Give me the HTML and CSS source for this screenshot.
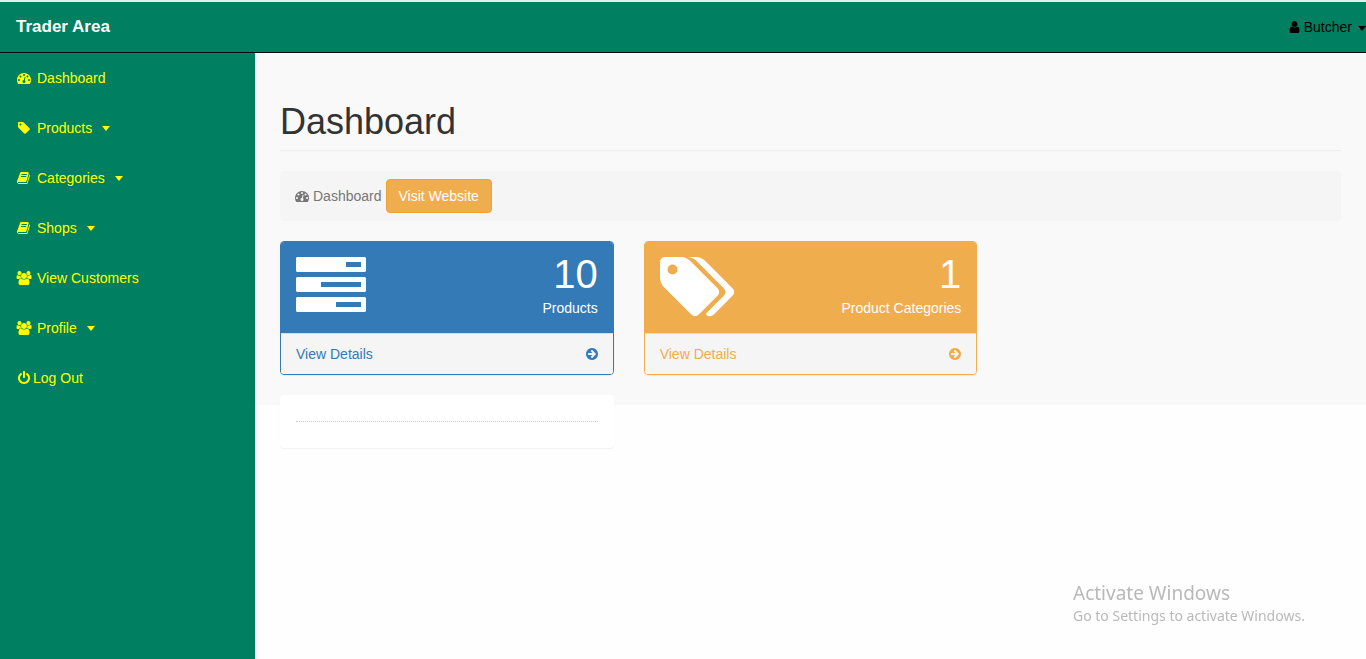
FILE: index.html
```html
<!DOCTYPE html>
<html lang="en">
<head>
<meta charset="utf-8">
<title>Trader Area</title>
<link rel="stylesheet" href="styles.css">
</head>
<body>
<svg class="sprite" aria-hidden="true">
  <symbol id="dash" viewBox="0 0 1792 1792"><path d="M384 1152q0-53-37.5-90.5t-90.5-37.5-90.5 37.5-37.5 90.5 37.5 90.5 90.5 37.5 90.5-37.5 37.5-90.5zm192-448q0-53-37.5-90.5t-90.5-37.5-90.5 37.5-37.5 90.5 37.5 90.5 90.5 37.5 90.5-37.5 37.5-90.5zm428 481l101-382q6-26-7.5-48.5t-38.5-29.5-48 6.5-30 39.5l-101 382q-60 5-107 43.5t-63 98.5q-20 77 20 146t117 89 146-20 89-117q16-60-6-117t-72-91zm660-33q0-53-37.5-90.5t-90.5-37.5-90.5 37.5-37.5 90.5 37.5 90.5 90.5 37.5 90.5-37.5 37.5-90.5zm-640-640q0-53-37.5-90.5t-90.5-37.5-90.5 37.5-37.5 90.5 37.5 90.5 90.5 37.5 90.5-37.5 37.5-90.5zm448 192q0-53-37.5-90.5t-90.5-37.5-90.5 37.5-37.5 90.5 37.5 90.5 90.5 37.5 90.5-37.5 37.5-90.5zm320 448q0 261-141 483-19 29-54 29h-1402q-35 0-54-29-141-221-141-483 0-182 71-348t191-286 286-191 348-71 348 71 286 191 191 286 71 348z"/></symbol>
  <symbol id="tag" viewBox="0 0 1792 1792"><path d="M576 448q0-53-37.5-90.5t-90.5-37.5-90.5 37.5-37.5 90.5 37.5 90.5 90.5 37.5 90.5-37.5 37.5-90.5zm1067 576q0 53-37 90l-491 492q-39 37-91 37-53 0-90-37l-715-716q-38-37-64.5-101t-26.5-117v-416q0-52 38-90t90-38h416q53 0 117 26.5t102 64.5l715 714q37 39 37 91z"/></symbol>
  <symbol id="book" viewBox="0 0 1792 1792"><path d="M1639 478q40 57 18 129l-275 906q-19 64-76.5 107.5t-122.5 43.5h-923q-77 0-148.5-53.5t-99.5-131.5q-24-67-2-127 0-4 3-27t4-37q1-8-3-21.5t-3-19.5q2-11 8-21t16.5-23.5 16.5-23.5q23-38 45-91.5t30-91.5q3-10 .5-30t-.5-28q3-11 17-28t17-23q21-36 42-92t25-90q1-9-2.5-32t.5-28q4-13 22-30.5t22-22.5q19-26 42.5-84.5t27.5-96.5q1-8-3-25.5t-2-26.5q2-8 9-18t18-23 17-21q8-12 16.5-30.5t15-35 16-36 19.5-32 26.5-23.5 36-11.5 47.5 5.5l-1 3q38-9 51-9h761q74 0 114 56t18 130l-274 906q-36 119-71.5 153.5t-128.5 34.5h-869q-27 0-38 15-11 16-1 43 24 70 144 70h923q29 0 56-15.5t35-41.5l300-987q7-22 5-57 38 15 59 43zm-1064 2q-4 13 2 22.5t20 9.5h608q13 0 25.5-9.5t16.5-22.5l21-64q4-13-2-22.5t-20-9.5h-608q-13 0-25.5 9.5t-16.5 22.5zm-83 256q-4 13 2 22.5t20 9.5h608q13 0 25.5-9.5t16.5-22.5l21-64q4-13-2-22.5t-20-9.5h-608q-13 0-25.5 9.5t-16.5 22.5z"/></symbol>
  <symbol id="users" viewBox="0 0 1920 1792"><path d="M593 896q-162 5-265 128h-134q-82 0-138-40.5t-56-118.5q0-353 124-353 6 0 43.5 21t97.5 42.5 119 21.5q67 0 133-23-5 37-5 66 0 159 93 293zm1071 637q0 120-73 189.5t-194 69.5h-874q-121 0-194-69.5t-73-189.5q0-53 3.5-103.5t14-109 26.5-108.5 43-97.5 62-81 85.5-53.5 111.5-20q10 0 43 21.5t73 48 107 48 135 21.5 135-21.5 107-48 73-48 43-21.5q61 0 111.5 20t85.5 53.5 62 81 43 97.5 26.5 108.5 14 109 3.5 103.5zm-1024-1277q0 106-75 181t-181 75-181-75-75-181 75-181 181-75 181 75 75 181zm704 384q0 159-112.5 271.5t-271.5 112.5-271.5-112.5-112.5-271.5 112.5-271.5 271.5-112.5 271.5 112.5 112.5 271.5zm576 225q0 78-56 118.5t-138 40.5h-134q-103-123-265-128 93-134 93-293 0-29-5-66 66 23 133 23 59 0 119-21.5t97.5-42.5 43.5-21q124 0 124 353zm-128-609q0 106-75 181t-181 75-181-75-75-181 75-181 181-75 181 75 75 181z"/></symbol>
  <symbol id="power" viewBox="0 0 1792 1792"><path d="M1664 896q0 156-61 298t-164 245-245 164-298 61-298-61-245-164-164-245-61-298q0-182 80.5-343t226.5-270q43-32 95.5-25t83.5 50q32 42 24.5 94.5t-49.5 84.5q-98 74-151.5 181t-53.5 228q0 104 40.5 198.5t109.5 163.5 163.5 109.5 198.5 40.5 198.5-40.5 163.5-109.5 109.5-163.5 40.5-198.5q0-121-53.5-228t-151.5-181q-42-32-49.5-84.5t24.5-94.5q31-43 84-50t95 25q146 109 226.5 270t80.5 343zm-640-768v640q0 52-38 90t-90 38-90-38-38-90v-640q0-52 38-90t90-38 90 38 38 90z"/></symbol>
  <symbol id="user" viewBox="256 0 1280 1792"><path d="M1536 1399q0 109-62.5 187t-150.5 78h-854q-88 0-150.5-78t-62.5-187q0-85 8.5-160.5t31.5-152 58.5-131 94-89 134.5-34.5q131 128 313 128t313-128q76 0 134.5 34.5t94 89 58.5 131 31.5 152 8.5 160.5zm-256-887q0 159-112.5 271.5t-271.5 112.5-271.5-112.5-112.5-271.5 112.5-271.5 271.5-112.5 271.5 112.5 112.5 271.5z"/></symbol>
  <symbol id="go" viewBox="128 0 1536 1792"><path d="M1413 896q0-27-18-45l-91-91-362-362q-18-18-45-18t-45 18l-91 91q-18 18-18 45t18 45l189 189h-502q-26 0-45 19t-19 45v128q0 26 19 45t45 19h502l-189 189q-19 19-19 45t19 45l91 91q18 18 45 18t45-18l362-362 91-91q18-18 18-45zm251 0q0 209-103 385.5t-279.5 279.5-385.5 103-385.5-103-279.5-279.5-103-385.5 103-385.5 279.5-279.5 385.5-103 385.5 103 279.5 279.5 103 385.5z"/></symbol>
  <symbol id="caret" viewBox="0 0 8 5"><path d="M0 0h8L4 5z"/></symbol>
</svg>

<header class="navbar">
  <a class="brand" href="#">Trader Area</a>
  <a class="account" href="#"><svg class="icon-user"><use href="#user"/></svg><span>Butcher</span><svg class="caret"><use href="#caret"/></svg></a>
</header>

<div class="layout">
  <nav class="sidebar">
    <a href="#"><svg class="icon"><use href="#dash"/></svg><span>Dashboard</span></a>
    <a href="#"><svg class="icon"><use href="#tag"/></svg><span>Products</span><svg class="caret"><use href="#caret"/></svg></a>
    <a href="#"><svg class="icon"><use href="#book"/></svg><span>Categories</span><svg class="caret"><use href="#caret"/></svg></a>
    <a href="#"><svg class="icon"><use href="#book"/></svg><span>Shops</span><svg class="caret"><use href="#caret"/></svg></a>
    <a href="#"><svg class="icon"><use href="#users"/></svg><span>View Customers</span></a>
    <a href="#"><svg class="icon"><use href="#users"/></svg><span>Profile</span><svg class="caret"><use href="#caret"/></svg></a>
    <a class="logout" href="#"><svg class="icon"><use href="#power"/></svg><span>Log Out</span></a>
  </nav>

  <main class="content">
    <div class="overview">
      <h1>Dashboard</h1>
      <div class="breadcrumb">
        <svg class="icon-crumb"><use href="#dash"/></svg>
        <span>Dashboard</span>
        <button class="btn" type="button">Visit Website</button>
      </div>
      <div class="cards">
        <section class="card card-blue">
          <div class="card-head">
            <svg class="tasks" viewBox="0 0 70 55"><path fill-rule="evenodd" d="M1 0h68l1 1v13l-1 1H1l-1-1V1zM50 5h15v5H50zM1 20h68l1 1v13l-1 1H1l-1-1V21zM25 25h40v5H25zM1 40h68l1 1v13l-1 1H1l-1-1V41zM40 45h25v5H40z"/></svg>
            <div class="stat"><div class="number">10</div><div>Products</div></div>
          </div>
          <a class="card-foot" href="#"><span>View Details</span><svg class="icon-go"><use href="#go"/></svg></a>
        </section>
        <section class="card card-orange">
          <div class="card-head">
            <svg class="tags" viewBox="0 128 1920 1536"><path d="M448 448q0-53-37.5-90.5t-90.5-37.5-90.5 37.5-37.5 90.5 37.5 90.5 90.5 37.5 90.5-37.5 37.5-90.5zm1067 576q0 53-37 90l-491 492q-39 37-91 37-53 0-90-37l-715-716q-38-37-64.5-101t-26.5-117v-416q0-52 38-90t90-38h416q53 0 117 26.5t102 64.5l715 714q37 39 37 91zm384 0q0 53-37 90l-491 492q-39 37-91 37-36 0-59-14t-53-45l470-470q37-37 37-90 0-52-37-91l-715-714q-38-38-102-64.5t-117-26.5h224q53 0 117 26.5t102 64.5l715 714q37 39 37 91z"/></svg>
            <div class="stat"><div class="number">1</div><div>Product Categories</div></div>
          </div>
          <a class="card-foot" href="#"><span>View Details</span><svg class="icon-go"><use href="#go"/></svg></a>
        </section>
      </div>
    </div>
    <div class="extra cards">
      <section class="panel"><hr></section>
    </div>
  </main>
</div>

<aside class="watermark">
  <div class="watermark-title">Activate Windows</div>
  <div>Go to Settings to activate Windows.</div>
</aside>
</body>
</html>
```
FILE: styles.css
```css
* { box-sizing: border-box; }
body {
  margin: 0;
  min-height: 100vh;
  display: flex;
  flex-direction: column;
  font: 14px/20px "Liberation Sans", Arial, sans-serif;
  color: #333;
  background: #fefefe;
}
a { color: inherit; text-decoration: none; }
svg { fill: currentColor; flex: none; }
.sprite { position: absolute; width: 0; height: 0; }

.navbar {
  display: flex;
  align-items: center;
  justify-content: space-between;
  height: 53px;
  border-top: 2px solid #e3efec;
  border-bottom: 1px solid #080808;
  padding-left: 16px;
  background: #008060;
}
.brand { font-size: 17px; font-weight: 700; color: #fff; }
.account { display: flex; align-items: center; gap: 4px; color: #000; }
.account .caret { margin: 2px 0 0 2px; }
.icon-user { width: 11px; height: 14px; }
.caret { width: 8px; height: 5px; }

.layout { display: flex; flex: 1; }
.sidebar { width: 255px; flex: none; background: #008060; color: #ff0; }
.sidebar a { display: flex; align-items: center; gap: 4px; padding: 15px; }
.sidebar .caret { margin-left: 6px; }
.sidebar .logout { gap: 0; }
.icon { width: 18px; height: 14px; }

.content { flex: 1; min-width: 0; }
.overview { padding: 48px 25px 30px; background: #f9f9f9; }
h1 {
  margin: 0 0 20px;
  padding-bottom: 7px;
  border-bottom: 1px solid #eee;
  font-size: 36px;
  line-height: 42px;
  font-weight: 400;
}
.breadcrumb {
  display: flex;
  align-items: center;
  gap: 4px;
  margin-bottom: 20px;
  padding: 8px 15px;
  border-radius: 4px;
  background: #f5f5f5;
  color: #777;
}
.icon-crumb { width: 14px; height: 14px; }
.btn {
  padding: 6px 12px;
  border: 1px solid #eea236;
  border-radius: 4px;
  background: #f0ad4e;
  color: #fff;
  font: inherit;
}
.cards {
  display: grid;
  grid-template-columns: repeat(3, minmax(0, 1fr));
  gap: 30px;
}
.card {
  overflow: hidden;
  border: 1px solid var(--tone);
  border-radius: 4px;
  box-shadow: 0 1px 1px rgba(0, 0, 0, .05);
}
.card-blue { --tone: #337ab7; }
.card-orange { --tone: #f0ad4e; }
.card-head {
  display: flex;
  align-items: flex-start;
  justify-content: space-between;
  padding: 15px;
  background: var(--tone);
  color: #fff;
}
.tasks { width: 70px; height: 55px; }
.tags { width: 75px; height: 60px; }
.stat { text-align: right; }
.number { margin-bottom: 7px; font-size: 40px; line-height: 34px; }
.card-foot {
  display: flex;
  align-items: center;
  justify-content: space-between;
  padding: 10px 15px;
  border-top: 1px solid #ddd;
  background: #f5f5f5;
  color: var(--tone);
}
.icon-go { width: 12px; height: 14px; }

.extra { margin-top: -10px; padding: 0 25px; }
.panel {
  padding: 26px 16px;
  border-radius: 4px;
  background: #fff;
  box-shadow: 0 1px 1px rgba(0, 0, 0, .05);
}
hr { margin: 0; border: 0; border-top: 1px dotted #ccc; }

.watermark {
  position: fixed;
  right: 57px;
  bottom: 33px;
  min-width: 236px;
  color: #b9b9b9;
  font-family: "Noto Sans", "Open Sans", sans-serif;
}
.watermark-title { font-size: 19px; line-height: 26px; }
```
